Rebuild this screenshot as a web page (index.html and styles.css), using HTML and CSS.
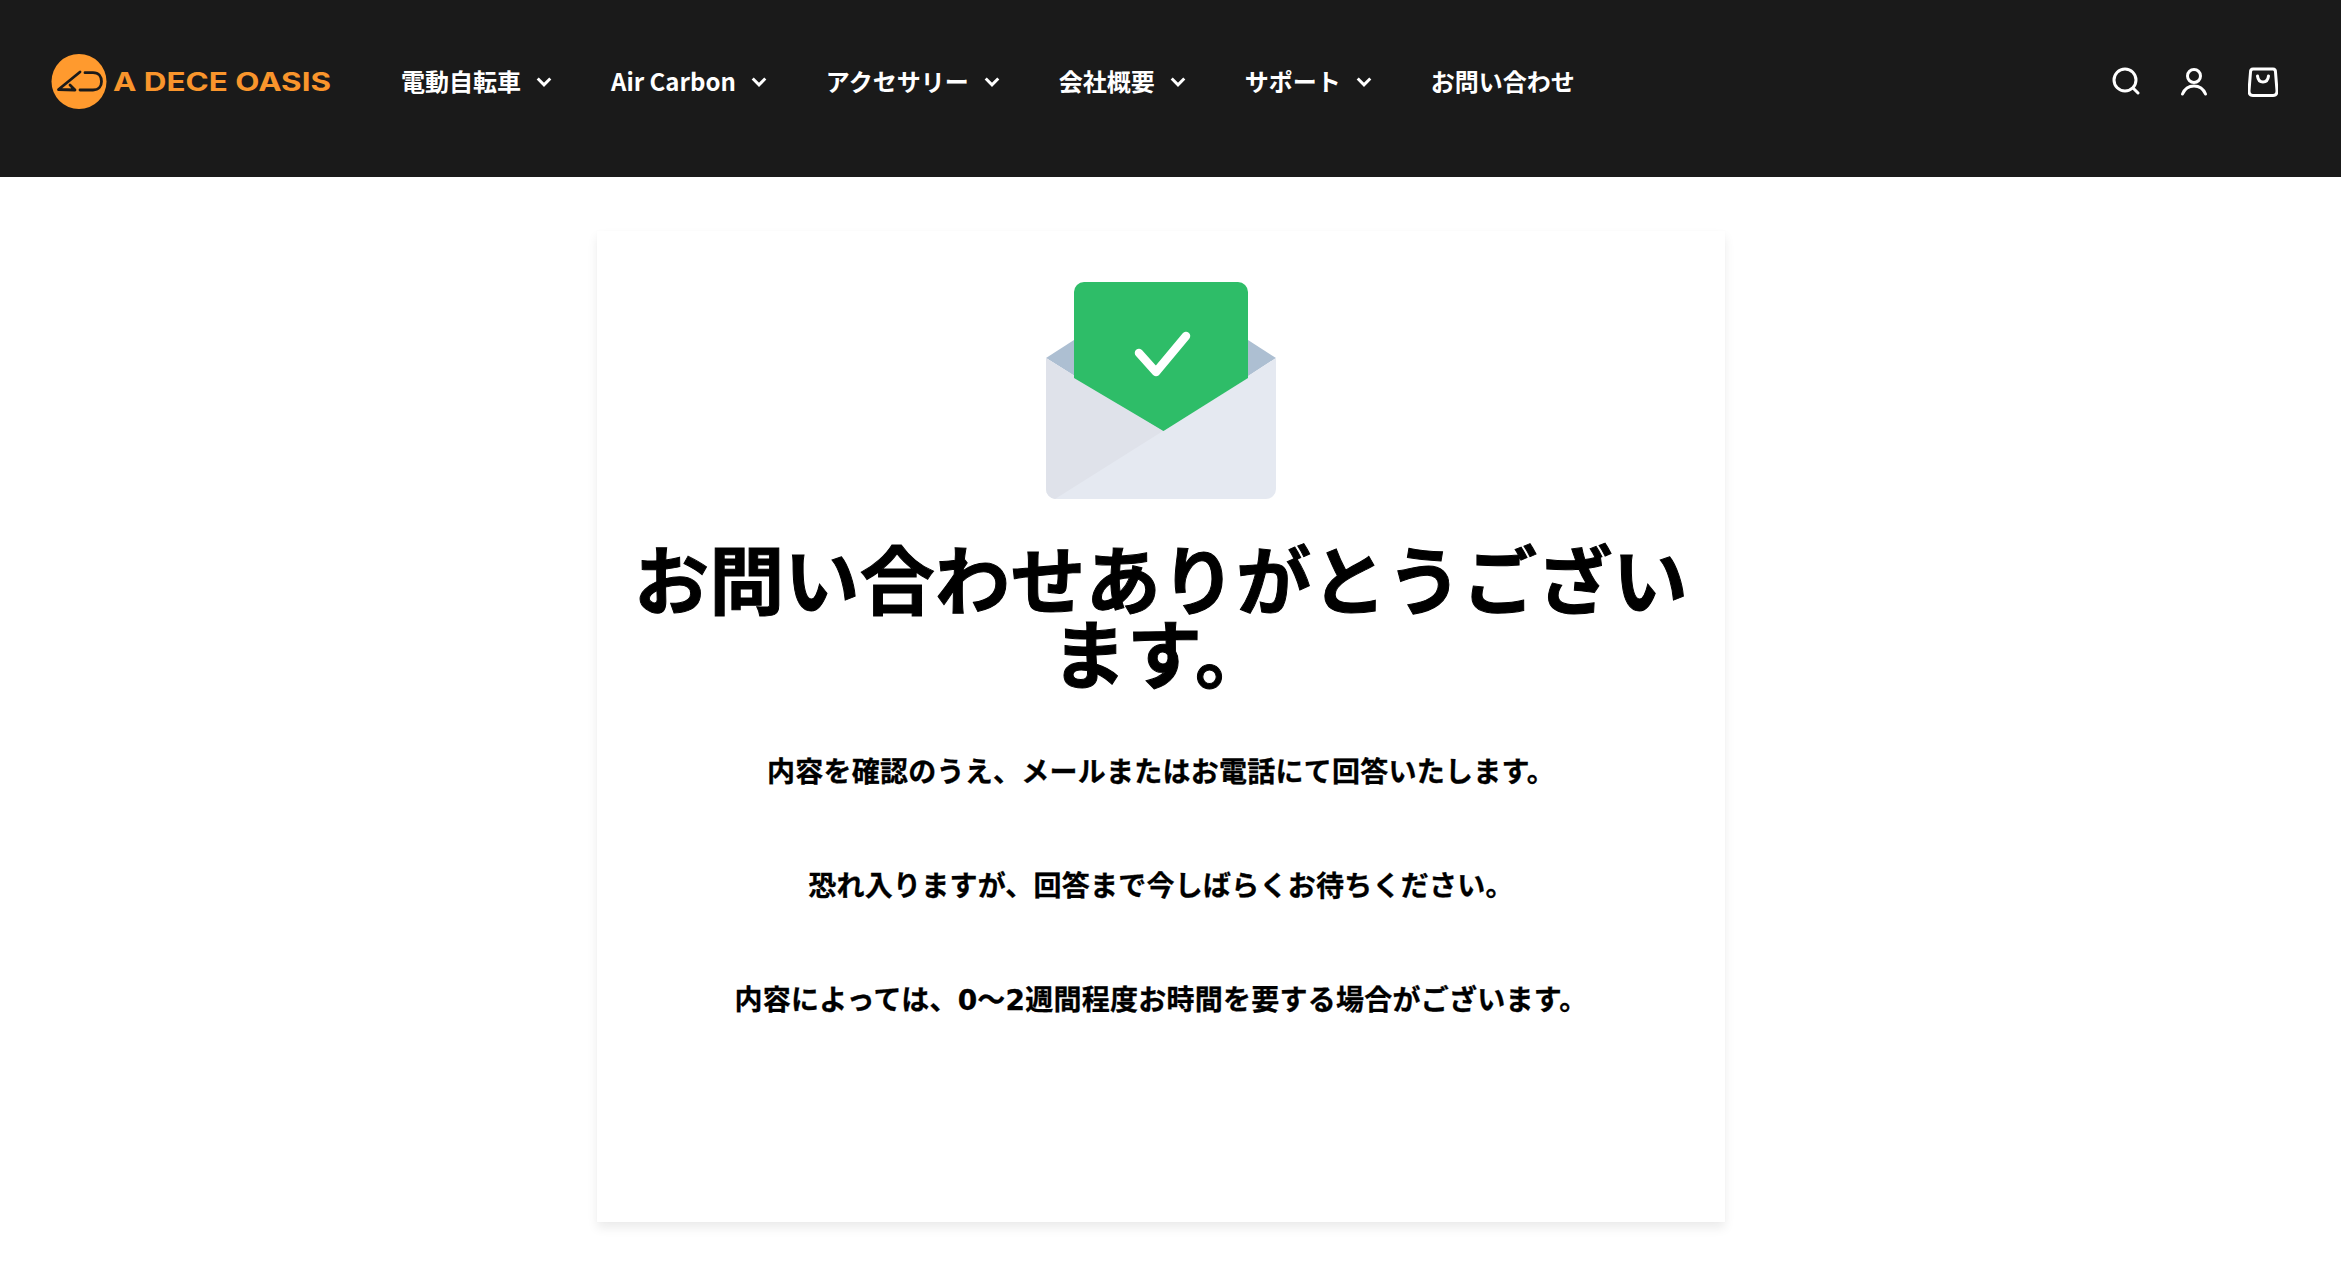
FILE: index.html
```html
<!DOCTYPE html>
<html lang="ja">
<head>
    <meta charset="UTF-8">
    <meta name="viewport" content="width=device-width, initial-scale=1.0">
    <title>お問い合わせありがとうございます。</title>
    <link rel="stylesheet" href="styles.css">
</head>
<body>
    <header class="site-header">
        <a class="logo" href="#">
            <svg width="282" height="56" viewBox="0 0 282 56">
                <circle cx="28" cy="27.5" r="27.5" fill="#ff9a2e"/>
                <path d="M29 18 L7.5 35.5 L24 36 L19 31 M34 18.700 H42 C48 18.700 50.500 23 50.500 27.500 C50.500 32 48 36 42 36 H29" fill="none" stroke="#1a1a1a" stroke-width="2.8" stroke-linejoin="round" stroke-linecap="round"/>
                <text class="logo-text" x="62" y="37" textLength="218" lengthAdjust="spacingAndGlyphs">A DECE OASIS</text>
            </svg>
        </a>
        <nav class="main-nav">
            <a class="nav-item" href="#">電動自転車<svg class="chevron" viewBox="0 0 14 10"><path d="M1.5 2 L7 7.5 L12.5 2"/></svg></a>
            <a class="nav-item" href="#">Air Carbon<svg class="chevron" viewBox="0 0 14 10"><path d="M1.5 2 L7 7.5 L12.5 2"/></svg></a>
            <a class="nav-item" href="#">アクセサリー<svg class="chevron" viewBox="0 0 14 10"><path d="M1.5 2 L7 7.5 L12.5 2"/></svg></a>
            <a class="nav-item" href="#">会社概要<svg class="chevron" viewBox="0 0 14 10"><path d="M1.5 2 L7 7.5 L12.5 2"/></svg></a>
            <a class="nav-item" href="#">サポート<svg class="chevron" viewBox="0 0 14 10"><path d="M1.5 2 L7 7.5 L12.5 2"/></svg></a>
            <a class="nav-item" href="#">お問い合わせ</a>
        </nav>
        <div class="header-icons">
            <svg class="icon" width="28" height="28" viewBox="0 0 28 28"><circle cx="13" cy="13" r="11"/><path d="M21 21 L26 26"/></svg>
            <svg class="icon" width="28" height="30" viewBox="0 0 28 30"><circle cx="14" cy="9" r="6.5"/><path d="M2.5 27 C5 21 9 19 14 19 C19 19 23 21 25.5 27"/></svg>
            <svg class="icon" width="30" height="30" viewBox="0 0 30 30"><path d="M5 2 H25 C27 2 27.5 3 27.5 5 L29 24 C29 27 27.500 28.500 25 28.500 H5 C2.500 28.500 1 27 1 24 L2.500 5 C2.500 3 3 2 5 2 Z"/><path d="M9.500 9 C10 13 12 15 15 15 C18 15 20 13 20.500 9"/></svg>
        </div>
    </header>

    <main class="page">
        <section class="card">
            <svg class="envelope" width="230" height="217" viewBox="0 0 230 217">
                <path d="M0 76 L28 58 H202 L230 76 L117 150 Z" fill="#adbfd2"/>
                <path d="M0 76 L117 149 L230 76 V207 A10 10 0 0 1 220 217 H10 A10 10 0 0 1 0 207 Z" fill="#e5e9f1"/>
                <path d="M0 76 L117 149 L9 217 A10 10 0 0 1 0 207 Z" fill="#dfe2ea"/>
                <path d="M28 10 A10 10 0 0 1 38 0 H192 A10 10 0 0 1 202 10 V96 L117.500 149 L28 96 Z" fill="#2ebd68"/>
                <path d="M93 71 L110 90 L140 54" fill="none" stroke="#fff" stroke-width="8.500" stroke-linecap="round" stroke-linejoin="round"/>
            </svg>
            <h1 class="thanks-title">お問い合わせありがとうございます。</h1>
            <p class="thanks-text">内容を確認のうえ、メールまたはお電話にて回答いたします。</p>
            <p class="thanks-text">恐れ入りますが、回答まで今しばらくお待ちください。</p>
            <p class="thanks-text">内容によっては、0～2週間程度お時間を要する場合がございます。</p>
        </section>
    </main>
</body>
</html>
```

FILE: styles.css
```css
* { box-sizing: border-box; }
body {
    margin: 0;
    background: #fff;
    color: #000;
    font-family: "DejaVu Sans", "Noto Sans CJK JP", sans-serif;
}
.site-header {
    display: flex;
    align-items: flex-start;
    height: 177px;
    padding: 54px 63px 0 51px;
    background: #1a1a1a;
}
.logo { display: block; }
.logo-text {
    font-family: Inter, sans-serif;
    font-size: 25px;
    font-weight: 700;
    fill: #f9952c;
}
.main-nav {
    display: flex;
    gap: 59px;
    margin-left: 68px;
    padding-top: 8px;
}
.nav-item {
    display: flex;
    align-items: center;
    gap: 15px;
    height: 36px;
    color: #fff;
    font-family: "Noto Sans CJK JP", sans-serif;
    font-size: 24px;
    font-weight: 700;
    text-decoration: none;
    white-space: nowrap;
}
.chevron {
    width: 16px;
    height: 12px;
    margin-top: 4px;
    fill: none;
    stroke: #fff;
    stroke-width: 2.6;
}
.header-icons {
    display: flex;
    gap: 40px;
    margin-left: auto;
    padding-top: 13px;
}
.icon {
    fill: none;
    stroke: #fff;
    stroke-width: 3;
    stroke-linecap: round;
}
.page {
    padding: 54px 19px 51px 0;
}
.card {
    width: 1128px;
    height: 991px;
    margin: 0 auto;
    padding: 51px 30px 0;
    text-align: center;
    box-shadow: 0 6px 10px rgba(0,0,0,0.08), 0 0 3px rgba(0,0,0,0.02);
}
.envelope { display: block; margin: 0 auto; }
.thanks-title {
    margin: 47px 0 0;
    font-size: 75px;
    font-weight: 700;
    letter-spacing: 0.3px;
    line-height: 74px;
    -webkit-text-stroke: 1px #000;
}
.thanks-text {
    margin: 0;
    font-size: 28px;
    font-weight: 700;
    letter-spacing: 0.25px;
    line-height: 114px;
    -webkit-text-stroke: 0.3px #000;
}
.thanks-title + .thanks-text { margin-top: 22px; }
```
